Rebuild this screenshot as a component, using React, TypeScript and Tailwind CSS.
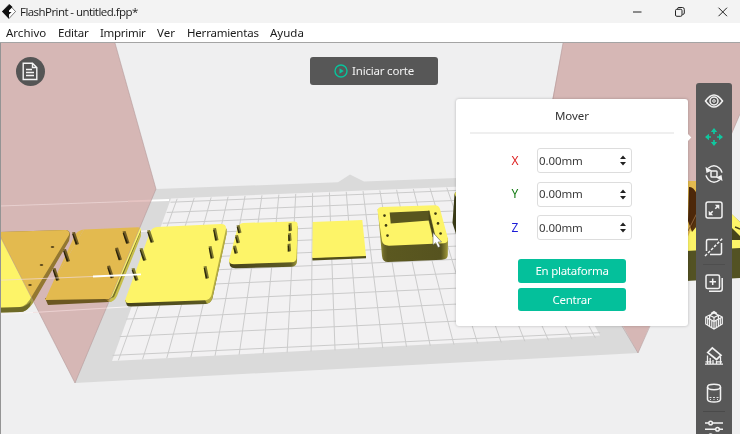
import React from "react";

type Pt = [number, number];

// Maps the unit square onto the quad tl, tr, br, bl in perspective.
function projector(tl: Pt, tr: Pt, br: Pt, bl: Pt) {
  const [x0, y0] = tl, [x1, y1] = tr, [x2, y2] = br, [x3, y3] = bl;
  const dx1 = x1 - x2, dx2 = x3 - x2, dx3 = x0 - x1 + x2 - x3;
  const dy1 = y1 - y2, dy2 = y3 - y2, dy3 = y0 - y1 + y2 - y3;
  const den = dx1 * dy2 - dx2 * dy1;
  const g = (dx3 * dy2 - dx2 * dy3) / den;
  const h = (dx1 * dy3 - dx3 * dy1) / den;
  return (u: number, v: number): Pt => {
    const w = g * u + h * v + 1;
    return [
      ((x1 - x0 + g * x1) * u + (x3 - x0 + h * x3) * v + x0) / w,
      ((y1 - y0 + g * y1) * u + (y3 - y0 + h * y3) * v + y0) / w,
    ];
  };
}

const COLS = 20;
const ROWS = 11;
const proj = projector([176, 202], [515, 188], [592.7, 333], [120.3, 355]);

function Grid() {
  const lines: [Pt, Pt][] = [];
  for (let i = 0; i <= COLS; i++) lines.push([proj(i / COLS, -0.03), proj(i / COLS, 1.025)]);
  for (let j = 0; j <= ROWS; j++) lines.push([proj(-0.016, j / ROWS), proj(1.016, j / ROWS)]);
  return (
    <g stroke="#cbcbcb" strokeWidth="1">
      {lines.map(([a, b], i) => (
        <line key={i} x1={a[0]} y1={a[1]} x2={b[0]} y2={b[1]} />
      ))}
    </g>
  );
}

function Slot({ x, y, dx = 4, dy = 12 }: { x: number; y: number; dx?: number; dy?: number }) {
  return (
    <g>
      <path d={`M${x} ${y}l3 -.6l${dx} ${dy}l-2.6 1z`} fill="#7b7530" />
      <path d={`M${x + 0.2} ${y + 1.6}l1.2 0l${dx} ${dy - 2}l-1.8 .6z`} fill="#2f2c0c" />
    </g>
  );
}

const TOP = "#fdf468";
const SIDE = "#59561f";

function Scene() {
  return (
    <svg className="absolute inset-0" width="740" height="391" viewBox="0 43 740 391">
      <defs>
        <linearGradient id="edge" x1="0" x2="1" y1="0" y2="0">
          <stop offset="0" stopColor="#45421a" />
          <stop offset=".9" stopColor="#5f5c24" />
          <stop offset="1" stopColor="#aaa33f" />
        </linearGradient>
        <linearGradient id="box" x1="0" x2="1" y1="0" y2="0">
          <stop offset="0" stopColor="#b5ad42" />
          <stop offset=".09" stopColor="#6a6628" />
          <stop offset=".14" stopColor="#5b5820" />
          <stop offset=".9" stopColor="#56531f" />
          <stop offset="1" stopColor="#a39b3c" />
        </linearGradient>
      </defs>
      <rect y="43" width="740" height="391" fill="#efeff0" />
      <path d="M156 189L338 182.3L350 174.5L364 181.4L538 175L638 353L75 383z" fill="#dadada" />
      <path d="M171 198.5L519 184L600 335.5L112 361z" fill="#f2f1f2" />
      <Grid />
      <g stroke="#f9f4f5" fill="none">
        <path d="M128 201.3L169 200" strokeWidth="1.8" stroke="#fff" />
        <path d="M0 314.5L128 306.8" strokeWidth="1" />
        <path d="M139 231.5L152 230.5" strokeWidth="1.5" />
      </g>

      <path d="M0 232L66 230Q70 230.500 70 235L69 241L33 303Q27 312 20 312L0 312.500z" fill="#a49c40" />
      <path d="M0 307.500L22 307Q28 305 31 301L30 306Q26 312 20 312L0 312.500z" fill="#6e6a28" />
      <path d="M0 232L66 230Q70 231 69 235L32 296Q27 306 20 307L0 307.500z" fill={TOP} />
      <g fill="#665e24">
        <ellipse cx="52.500" cy="247" rx="1.800" ry="1" />
        <ellipse cx="41.500" cy="265" rx="1.800" ry="1" />
        <ellipse cx="30" cy="285" rx="1.800" ry="1" />
      </g>

      <path d="M45 298L48 305L109 302Q114 301 116 296L141 234V229L120 260L100 295z" fill="#77712b" />
      <path d="M107 300L114 297L141 231V236L117 296Q114 302 109 302z" fill="#c8bf4b" />
      <path d="M84 229.500L138 227.200Q141 227.500 141 230L113 295Q111 300 105 299L45 300L54 280Z" fill={TOP} />
      <path d="M54 280L75 235Q78 230 84 229.500z" fill={TOP} />
      <Slot x={72} y={232.500} />
      <Slot x={63} y={249.500} />
      <Slot x={52.500} y={268.500} />
      <Slot x={122.500} y={231.500} />
      <Slot x={115} y={248} />
      <Slot x={107} y={266} />

      <path d="M125 300L127 305.500Q128 306.500 131 306.500L206 304Q211 303 212.500 298L226.500 234V228L205 295z" fill="url(#edge)" />
      <path d="M205 300L225 228L226.600 229V234L212.500 298Q211 303 207 303.500z" fill="#b5ad42" />
      <path d="M157 227L221 224Q226.500 224 226 229L211.500 295Q210 300 205 300.300L131 303Q124 303.500 125.500 299L150 232Q152 227.500 157 227z" fill={TOP} />
      <Slot x={147} y={230.500} />
      <Slot x={139.500} y={248.500} />
      <Slot x={131.500} y={268.500} />
      <Slot x={213} y={228.500} dx={2.500} />
      <Slot x={208.500} y={246.500} dx={2.500} />
      <Slot x={203.500} y={266.500} dx={2.500} />

      <path d="M229 260L230 266Q232 268.500 236 268.300L292 266.700Q296.500 266 297 262L297.800 226z" fill="url(#edge)" />
      <path d="M243 223L294 221.500Q297.800 221.500 297.700 225L296.500 258Q296.300 262 292 262.300L234 264.300Q228.500 264 229 260L237.500 228Q239 223.300 243 223z" fill={TOP} />
      <Slot x={236.500} y={225.500} dx={2} dy={7.500} />
      <Slot x={235} y={235.500} dx={2} dy={7.500} />
      <Slot x={233} y={246} dx={2} dy={7.500} />
      <Slot x={288.500} y={223.500} dx={0.600} dy={7.500} />
      <Slot x={288} y={233.500} dx={0.600} dy={7.500} />
      <Slot x={287.500} y={244} dx={0.600} dy={7.500} />

      <path d="M312.300 257.500L366 255.500V258.300L312.500 260.600z" fill="#514e18" />
      <path d="M312.700 222L362.300 220L366 256L312.300 258z" fill={TOP} />

      <path d="M377.700 209L382 256Q382.500 262 388 262L442 259.700Q447.700 259.500 447.800 255L448 238z" fill="url(#box)" />
      <path d="M382 207L435 205.200Q439 205.200 440 209L447.800 238Q448.500 243 444 243.300L389 245.700Q383 245.500 382 241L377.600 211Q377.500 207.200 382 207z" fill={TOP} />
      <path d="M389.700 212.600L429 210.700V220.500L390.700 223.500z" fill={SIDE} />
      <path d="M429 210.700L434.500 234L433 237L429 220.500z" fill="#47441a" stroke="#47441a" strokeWidth=".6" />
      <g fill="#3d3a10">
        <circle cx="384.500" cy="215.600" r="1.300" />
        <circle cx="386" cy="225.400" r="1.300" />
        <circle cx="387.500" cy="235.600" r="1.300" />
        <circle cx="435.500" cy="213.600" r="1.300" />
        <circle cx="438" cy="223.400" r="1.300" />
        <circle cx="440.600" cy="233.500" r="1.300" />
      </g>
      <path d="M456 192L454.500 194L452.500 223L456 234z" fill="#3c3d17" />
      <path d="M454.300 194L456 191.500V197z" fill="#e8df58" />

      <path d="M686 181H696L740 222V278L686 281z" fill="#535223" />
      <path d="M686 181H698L740 222V248L686 251z" fill={TOP} />
      <path d="M689 187Q693 186 697 194V226L692 232L688 221z" fill="#56340d" />
      <path d="M688 231L697 213" stroke="#9d844c" strokeWidth="1" />
      <path d="M732 228L740 236V240L732 240z" fill="#46441b" />
      <path d="M735 227Q738 228 740 229" stroke="#46441b" strokeWidth="1.500" fill="none" />

      <g style={{ mixBlendMode: "multiply" }}>
        <path d="M0 43H115L156 189L75 383L0 236z" fill="#e5c3c1" />
        <path d="M563 43H740V114L702 204L690 232L638 353L538 175z" fill="#e5c3c1" />
      </g>
      <path d="M115 43L156 189M0 236L75 383L156 189M563 43L553 99M622 326L638 353L650 326M731 135L740 114" stroke="#ad9595" strokeOpacity=".65" strokeWidth=".8" fill="none" />
      <path d="M0 206L128 201.500M0 280.200L93 276.500M33 312.500L108 308" stroke="#efdada" strokeOpacity=".7" strokeWidth="1" />
      <path d="M93 276.500L141 274.400" stroke="#fff" strokeWidth="1.800" />
      <path d="M.5 43V434" stroke="#949494" strokeWidth="1" />
      <path d="M433 232.500V245L435.700 242.700L438 247.500L440.200 246.400L438 242H441.500z" fill="#fff" stroke="#55554a" strokeWidth=".6" />
    </svg>
  );
}

function Icon({ children, className = "" }: { children: React.ReactNode; className?: string }) {
  return (
    <svg width="20" height="20" viewBox="0 0 20 20" fill="none" stroke="currentColor" strokeWidth="1.5" className={`shrink-0 ${className}`}>
      {children}
    </svg>
  );
}

function Toolbar() {
  return (
    <div className="absolute left-[696px] top-10 flex h-[352px] w-9 flex-col items-center gap-[16.5px] overflow-hidden rounded-t-[3px] bg-[#585858] pt-[7.75px] text-[#f2f2f2]">
      <Icon>
        <path d="M1.500 10Q10-2.200 18.500 10Q10 22.200 1.500 10z" />
        <circle cx="10" cy="10" r="4" />
        <circle cx="10" cy="10" r="1.300" strokeWidth="1" />
      </Icon>
      <Icon className="text-[#10c79f]">
        <path d="M10 2v5M10 13v5M2 10h5M13 10h5" strokeWidth="1.700" />
        <path d="M6.800 5L10 1l3.200 4zM6.800 15L10 19l3.200-4zM5 6.800L1 10l4 3.200zM15 6.800L19 10l-4 3.200z" fill="currentColor" stroke="none" />
      </Icon>
      <Icon>
        <rect x="7" y="7" width="6" height="6" rx=".8" />
        <path d="M4.200 4.300Q10-.8 15.500 4.200Q17.300 6 18 8.600M15.800 15.700Q10 20.800 4.500 15.800Q2.700 14 2 11.400" />
        <path d="M1.500 3l1 6 5.500-2.500zM18.500 17l-1-6-5.500 2.500z" fill="currentColor" stroke="none" />
      </Icon>
      <Icon>
        <rect x="2" y="2" width="16" height="16" rx="2" />
        <path d="M5.500 14.500L8.700 11.300M11.300 8.700l3.200-3.200" strokeWidth="1.600" />
        <path d="M15.300 4.700v4.500l-4.500-4.500zM4.700 15.300v-4.500l4.500 4.500z" fill="currentColor" stroke="none" />
      </Icon>
      <Icon>
        <path d="M2.500 14V4Q2.500 2.500 4 2.500H14M17.500 6V16Q17.500 17.500 16 17.500H6" />
        <path d="M1 19L19 1" strokeDasharray="2.800 1.500" />
      </Icon>
      <Icon>
        <rect x="2" y="2" width="13.500" height="13.500" rx="1.600" />
        <path d="M5 18.200H16Q18.200 18.200 18.200 16V5M8.700 5.500v6.500M5.500 8.700H12" />
      </Icon>
      <Icon>
        <path d="M10 7.500L5.600 5.200 10 3l4.400 2.200zM5.600 5.200V9L10 11.500 14.400 9V5.200M10 7.500v11M5.600 9v7.500L1.700 14V7L5.600 5M14.400 9v7.500L18.300 14V7L14.400 5M5.600 16.500L10 19l4.400-2.500M1.700 7l3.900 2.200M18.300 7l-3.900 2.200M7.800 10.500v7M12.200 10.500v7M3.700 8v7M16.300 8v7M7 3.500L10 1.500l3 2" strokeWidth="1.200" />
      </Icon>
      <Icon>
        <path d="M3.700 6.500L8.300 1.800 17 9.200 12.500 13.500z" strokeWidth="1.700" />
        <path d="M1 18.200h18M3.500 18V9.500M6.200 18v-6M9 18v-4M16.500 18v-7M12.500 18v-3M1.500 15.800h6M13 15.800h5" strokeWidth="1.300" />
      </Icon>
      <Icon>
        <ellipse cx="10" cy="4" rx="6.500" ry="2.700" />
        <path d="M3.500 4v12.300Q4 19 10 19t6.500-2.700V4" />
        <path d="M5.500 14.500h2M9 14.500h2M12.500 14.500h2M6 16.500h1M9.500 16.500h1M13 16.500h1" strokeWidth=".9" />
      </Icon>
      <Icon>
        <path d="M1 4h3.700M8.600 4H19M1 10.300h10.500M15.500 10.300H19M1 16.800h3.700M8.600 16.800H19" />
        <circle cx="6.600" cy="4" r="1.800" />
        <circle cx="13.500" cy="10.300" r="1.800" />
        <circle cx="6.600" cy="16.800" r="1.800" />
      </Icon>
      <div className="absolute left-[7px] top-[181px] h-px w-[22px] bg-[#4e4e4e]" />
      <div className="absolute left-[7px] top-[328px] h-px w-[22px] bg-[#4a4a4a]" />
    </div>
  );
}

function AxisRow({ axis, color }: { axis: string; color: string }) {
  return (
    <div className="flex h-[25px] items-center">
      <span className={`w-[25px] text-[12px] leading-none ${color}`}>{axis}</span>
      <div className="flex h-[25px] w-[95px] items-center justify-between rounded-[3px] border border-[#dddddd] pl-[1.500px] pr-[5px] text-[11.5px] text-[#3b3b3b]">
        <span className="tracking-[-0.1px]">0.00mm</span>
        <svg width="6" height="11" viewBox="0 0 6 11" fill="#222">
          <path d="M0 4L3 .5 6 4zM0 7L3 10.500 6 7z" />
        </svg>
      </div>
    </div>
  );
}

function MovePanel() {
  return (
    <div className="absolute left-[456px] top-14 flex h-[227px] w-[232px] flex-col items-center rounded-[3px] bg-white text-[12px] shadow-[0_0_3px_rgba(0,0,0,0.25)]">
      <div className="flex h-[35px] w-[204px] items-center justify-center border-b-2 border-[#efefef] text-[11.5px] text-[#333]">Mover</div>
      <div className="mt-[14px] flex w-[121px] flex-col gap-[8.5px]">
        <AxisRow axis="X" color="text-[#dd2222]" />
        <AxisRow axis="Y" color="text-[#107a10]" />
        <AxisRow axis="Z" color="text-[#1c1cd8]" />
      </div>
      <div className="mt-[19px] flex w-[108px] flex-col gap-[5px] text-[11.5px] tracking-[-0.25px] text-white">
        <button className="h-[23.500px] rounded-[3px] bg-[#04c09b] leading-none">En plataforma</button>
        <button className="h-[23.500px] rounded-[3px] bg-[#04c09b] leading-none">Centrar</button>
      </div>
      <svg className="absolute left-[231px] top-[33px]" width="5" height="11" viewBox="0 0 5 11" fill="#fff">
        <path d="M0 1L4.300 5.500 0 10z" />
      </svg>
    </div>
  );
}

export default function App() {
  return (
    <div className="flex h-[434px] w-[740px] flex-col overflow-hidden bg-[#efeff0] font-['Noto_Sans','Open_Sans',sans-serif] text-[#1b1b1b]">
      <header className="flex h-[23px] shrink-0 items-center justify-between bg-[#f3f3f3] pl-[2px] pr-[12px]">
        <div className="flex items-center gap-1 text-[11.500px]">
          <svg width="14" height="15" viewBox="0 0 14 15">
            <path d="M7 .5L13.500 7.500 7 14.500 .5 7.500z" fill="#fff" stroke="#222" strokeWidth=".6" />
            <path d="M7.500 .3L0 7.500 7 14.700V10.500L9.500 8H7V6.500L10.500 3z" fill="#111" />
          </svg>
          <span className="font-['Open_Sans','Noto_Sans',sans-serif] tracking-[-0.55px]">FlashPrint - untitled.fpp*</span>
        </div>
        <svg width="96" height="12" viewBox="0 0 96 12" fill="none" stroke="#222" strokeWidth="1">
          <path d="M1 6h8.500M86.500 1.700l8.500 8.500M95 1.700l-8.500 8.500" />
          <rect x="43.500" y="3.300" width="6.500" height="7" rx="1.300" />
          <path d="M45.500 3V2.700Q45.500 1.500 47 1.500H50.500Q52.300 1.500 52.300 3.500V7Q52.300 8.500 50.500 8.500" />
        </svg>
      </header>
      <nav className="flex h-[19px] shrink-0 items-center bg-white pl-[6px] text-[11.500px] leading-none">
        <span className="w-[52px]">Archivo</span>
        <span className="w-[42px] tracking-[-0.2px]">Editar</span>
        <span className="w-[57px] tracking-[-0.3px]">Imprimir</span>
        <span className="w-[30px]">Ver</span>
        <span className="w-[83px] tracking-[-0.2px]">Herramientas</span>
        <span>Ayuda</span>
      </nav>
      <main className="relative h-[392px] border-t border-[#a4a4a4]">
        <Scene />
        <button className="absolute left-[15.500px] top-[14px] flex size-[29px] items-center justify-center rounded-full bg-[#555]">
          <svg width="16" height="19" viewBox="0 0 16 19" fill="none" stroke="#f5f5f5" strokeWidth="1.400">
            <path d="M1.200 1.200H10.500L14.800 5.500V17.500H1.200zM10.500 1.200V5.500H14.800M4 7.500H10M4 10.500H12M4 13.500H12" />
          </svg>
        </button>
        <button className="absolute left-[310px] top-[14px] flex h-7 w-32 items-center justify-center gap-[4px] rounded-[3px] bg-[#575757] text-[11.500px] tracking-[-0.2px] text-[#f3f3f3]">
          <svg width="14" height="14" viewBox="0 0 14 14" fill="none" stroke="#08c49c" strokeWidth="1.400">
            <circle cx="7" cy="7" r="6" />
            <path d="M5.500 4.300V9.700L9.800 7z" fill="#08c49c" stroke="none" />
          </svg>
          <span>Iniciar corte</span>
        </button>
        <MovePanel />
        <Toolbar />
      </main>
    </div>
  );
}
